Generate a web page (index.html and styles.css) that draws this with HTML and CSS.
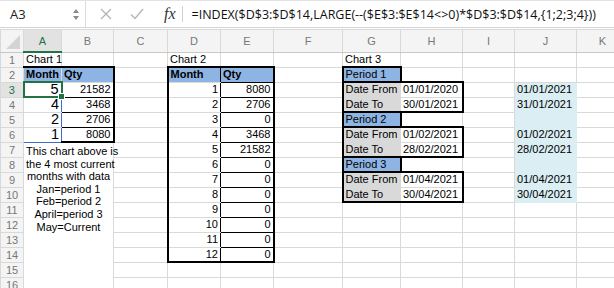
FILE: index.html
```html
<!DOCTYPE html>
<html lang="en">
<head>
    <meta charset="UTF-8">
    <title>Sheet</title>
    <link rel="stylesheet" href="styles.css">
</head>
<body>
    <div class="toolbar">
        <div class="namebox">
            <span class="ref">A3</span>
            <span class="spin"><i class="up"></i><i class="down"></i></span>
        </div>
        <div class="fbtns">
            <svg class="ico" width="12" height="12" viewBox="0 0 12 12"><path d="M1 1L11 11M11 1L1 11" stroke="#b4b4b4" stroke-width="1.3" fill="none"/></svg>
            <svg class="ico" width="14" height="12" viewBox="0 0 14 12"><path d="M1 6.5L5 10.5L13 1" stroke="#b4b4b4" stroke-width="1.3" fill="none"/></svg>
            <span class="fx">fx</span>
        </div>
        <div class="formula">=INDEX($D$3:$D$14,LARGE(--($E$3:$E$14&lt;&gt;0)*$D$3:$D$14,{1;2;3;4}))</div>
    </div>

    <table class="sheet">
        <colgroup>
            <col class="c-hd"><col class="c-a"><col class="c-b"><col class="c-c"><col class="c-d"><col class="c-e">
            <col class="c-f"><col class="c-g"><col class="c-h"><col class="c-i"><col class="c-j"><col class="c-k">
        </colgroup>
        <tr class="colhead">
            <th class="corner"><span class="tri"></span></th>
            <th class="cur">A</th><th>B</th><th>C</th><th>D</th><th>E</th><th>F</th>
            <th>G</th><th>H</th><th>I</th><th>J</th><th>K</th>
        </tr>
        <tr>
            <th>1</th><td>Chart 1</td><td></td><td></td><td>Chart 2</td><td></td><td></td>
            <td>Chart 3</td><td></td><td></td><td></td><td></td>
        </tr>
        <tr>
            <th>2</th><td class="hdr t2">Month</td><td class="hdr t2 r2 bl">Qty</td><td></td>
            <td class="hdr t2 l2 br">Month</td><td class="hdr t2 r2 bb">Qty</td><td></td>
            <td class="per box">Period 1</td><td></td><td></td><td></td><td></td>
        </tr>
        <tr>
            <th class="cur">3</th><td class="big sel">5<span class="handle"></span></td><td class="num r2 bl bb">21582</td><td></td>
            <td class="num l2 br">1</td><td class="num r2 bb">8080</td><td></td>
            <td class="lbl l2 t2">Date From</td><td class="date t2 r2 bl">01/01/2020</td><td></td><td class="out">01/01/2021</td><td></td>
        </tr>
        <tr>
            <th>4</th><td class="big rng">4</td><td class="num r2 bl bb">3468</td><td></td>
            <td class="num l2 br">2</td><td class="num r2 bb">2706</td><td></td>
            <td class="lbl l2 b2">Date To</td><td class="date b2 r2 bl bt">30/01/2021</td><td></td><td class="out">31/01/2021</td><td></td>
        </tr>
        <tr>
            <th>5</th><td class="big rng">2</td><td class="num r2 bl bb">2706</td><td></td>
            <td class="num l2 br">3</td><td class="num r2 bb">0</td><td></td>
            <td class="per box">Period 2</td><td></td><td></td><td class="out"></td><td></td>
        </tr>
        <tr>
            <th>6</th><td class="big rng rb">1</td><td class="num r2 b2 bl">8080</td><td></td>
            <td class="num l2 br">4</td><td class="num r2 bb">3468</td><td></td>
            <td class="lbl l2 t2">Date From</td><td class="date t2 r2 bl">01/02/2021</td><td></td><td class="out">01/02/2021</td><td></td>
        </tr>
        <tr>
            <th>7</th>
            <td class="note" colspan="2" rowspan="10">This chart above is<br>the 4 most current<br>months with data<br>Jan=period 1<br>Feb=period 2<br>April=period 3<br>May=Current</td>
            <td></td>
            <td class="num l2 br">5</td><td class="num r2 bb">21582</td><td></td>
            <td class="lbl l2 b2">Date To</td><td class="date b2 r2 bl bt">28/02/2021</td><td></td><td class="out">28/02/2021</td><td></td>
        </tr>
        <tr>
            <th>8</th><td></td>
            <td class="num l2 br">6</td><td class="num r2 bb">0</td><td></td>
            <td class="per box">Period 3</td><td></td><td></td><td class="out"></td><td></td>
        </tr>
        <tr>
            <th>9</th><td></td>
            <td class="num l2 br">7</td><td class="num r2 bb">0</td><td></td>
            <td class="lbl l2 t2">Date From</td><td class="date t2 r2 bl">01/04/2021</td><td></td><td class="out">01/04/2021</td><td></td>
        </tr>
        <tr>
            <th>10</th><td></td>
            <td class="num l2 br">8</td><td class="num r2 bb">0</td><td></td>
            <td class="lbl l2 b2">Date To</td><td class="date b2 r2 bl bt">30/04/2021</td><td></td><td class="out">30/04/2021</td><td></td>
        </tr>
        <tr>
            <th>11</th><td></td>
            <td class="num l2 br">9</td><td class="num r2 bb">0</td><td></td>
            <td></td><td></td><td></td><td></td><td></td>
        </tr>
        <tr>
            <th>12</th><td></td>
            <td class="num l2 br">10</td><td class="num r2 bb">0</td><td></td>
            <td></td><td></td><td></td><td></td><td></td>
        </tr>
        <tr>
            <th>13</th><td></td>
            <td class="num l2 br">11</td><td class="num r2 bb">0</td><td></td>
            <td></td><td></td><td></td><td></td><td></td>
        </tr>
        <tr>
            <th>14</th><td></td>
            <td class="num l2 br b2">12</td><td class="num r2 b2">0</td><td></td>
            <td></td><td></td><td></td><td></td><td></td>
        </tr>
        <tr>
            <th>15</th><td></td><td></td><td></td><td></td>
            <td></td><td></td><td></td><td></td><td></td>
        </tr>
        <tr>
            <th>16</th><td></td><td></td><td></td><td></td>
            <td></td><td></td><td></td><td></td><td></td>
        </tr>
    </table>
</body>
</html>
```

FILE: styles.css
```css
body {
    margin: 0;
    font-family: "Liberation Sans", Arial, sans-serif;
    background: #fff;
    overflow: hidden;
}

/* formula bar */
.toolbar {
    display: flex;
    align-items: center;
    height: 26px;
    border-top: 1px solid #e2e2e2;
    border-bottom: 1px solid #d4d4d4;
    font-family: "Open Sans", sans-serif;
}
.namebox {
    width: 86px;
    height: 100%;
    display: flex;
    align-items: center;
    justify-content: space-between;
    border-right: 1px solid #dcdcdc;
    box-sizing: border-box;
    padding: 0 6px 0 10px;
}
.ref {
    font-size: 13px;
    color: #222;
}
.spin {
    display: flex;
    flex-direction: column;
    gap: 3px;
}
.spin i {
    width: 0;
    height: 0;
    border-left: 3px solid transparent;
    border-right: 3px solid transparent;
}
.spin .up {
    border-bottom: 4px solid #8a8a8a;
}
.spin .down {
    border-top: 4px solid #8a8a8a;
}
.fbtns {
    display: flex;
    align-items: center;
    height: 100%;
    padding-left: 14px;
}
.ico {
    margin-right: 18px;
}
.fx {
    font-family: "Liberation Serif", serif;
    font-style: italic;
    font-size: 16px;
    color: #333;
    padding: 0 6px 0 2px;
    border-right: 1px solid #d0d0d0;
    line-height: 16px;
}
.formula {
    padding-left: 9px;
    font-size: 12.5px;
    color: #111;
    white-space: nowrap;
}

/* grid */
.sheet {
    border-collapse: collapse;
    table-layout: fixed;
    width: 628px;
    margin-top: 1px;
    font-size: 11px;
}
.c-hd { width: 23px; }
.c-a { width: 38px; }
.c-b { width: 52px; }
.c-c { width: 54px; }
.c-d { width: 53px; }
.c-e { width: 53px; }
.c-f { width: 69px; }
.c-g { width: 58px; }
.c-h { width: 62px; }
.c-i { width: 52px; }
.c-j { width: 62px; }
.c-k { width: 52px; }

.sheet tr {
    height: 15px;
}
.sheet td {
    border: 1px solid #d9d9d9;
    padding: 0 2px;
    height: 13px;
    line-height: 13px;
    white-space: nowrap;
    overflow: visible;
    color: #000;
}
.sheet th {
    background: #f4f4f4;
    border: 1px solid #d9d9d9;
    font-weight: normal;
    color: #777;
    font-size: 11px;
    padding: 0;
    text-align: center;
}
.colhead {
    height: 22px;
}
.colhead th {
    height: 21px;
    border-bottom: 1px solid #c8c8c8;
}
.corner {
    position: relative;
}
.tri {
    position: absolute;
    right: 3px;
    bottom: 3px;
    width: 0;
    height: 0;
    border-left: 14px solid transparent;
    border-bottom: 14px solid #d4d4d4;
}
.sheet th.cur {
    color: #217346;
    background: #e2e2e2;
}
.colhead th.cur {
    border-bottom: 2px solid #217346;
}

/* cell styles */
.num {
    text-align: right;
}
.big {
    text-align: right;
    font-size: 14.5px;
}
.sheet td.hdr {
    background: #8eb4e3;
    font-weight: bold;
}
.sheet td.per {
    background: #8eb4e3;
}
.sheet td.lbl {
    background: #d9d9d9;
}
.date {
    padding-left: 5px;
}
.sheet td.out {
    background: #daeef3;
    border-color: #daeef3;
    text-align: right;
    padding-right: 8px;
}
.sheet td.note {
    vertical-align: top;
    text-align: center;
    line-height: 12.6px;
    padding-top: 2px;
}

/* borders */
.sheet td.t2 { border-top: 2px solid #000; }
.sheet td.r2 { border-right: 2px solid #000; }
.sheet td.b2 { border-bottom: 2px solid #000; }
.sheet td.l2 { border-left: 2px solid #000; }
.sheet td.bl { border-left: 1px solid #000; }
.sheet td.br { border-right: 1px solid #000; }
.sheet td.bb { border-bottom: 1px solid #000; }
.sheet td.bt { border-top: 1px solid #000; }
.sheet td.box { border: 2px solid #000; }
.sheet td.sel {
    position: relative;
    border: 2px solid #217346;
}
.handle {
    position: absolute;
    right: -4px;
    bottom: -4px;
    width: 5px;
    height: 5px;
    background: #217346;
    border: 1px solid #fff;
}
.sheet td.rng {
    border-top-color: #fff;
    border-right: 1px solid #3a6fd0;
}
.sheet td.rb {
    border-bottom: 1px solid #3a6fd0;
}
```
